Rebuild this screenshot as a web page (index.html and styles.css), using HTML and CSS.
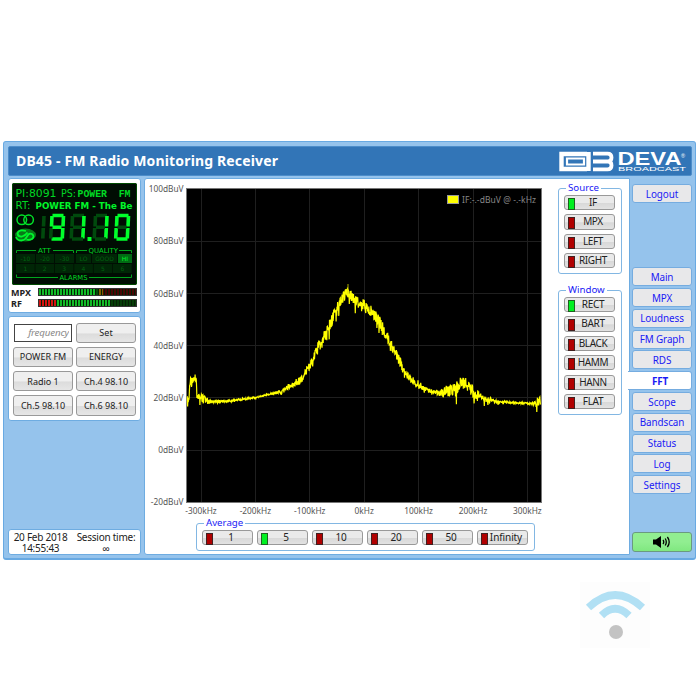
FILE: index.html
```html
<!DOCTYPE html>
<html lang="en">
<head>
    <meta charset="UTF-8">
    <meta name="viewport" content="width=device-width, initial-scale=1.0">
    <title>DB45 - FM Radio Monitoring Receiver</title>
    <link rel="stylesheet" href="styles.css">
</head>
<body>
    <div class="device">
        <header class="titlebar">
            <h1>DB45 - FM Radio Monitoring Receiver</h1>
            <svg class="logo" width="130" height="24" viewBox="558 148 130 24">
                <!-- logo mark -->
                <g fill="none" stroke="#fff">
                    <path d="M587 153H561.500V168H587" stroke-width="4.400"/>
                    <path d="M567 157.500H584V163.500H567Z" stroke-width="2.200"/>
                    <path d="M588.500 151V170" stroke-width="4.400"/>
                    <path d="M593 152.600H607.500Q611.500 152.600 611.500 156.500T608 160.500H593M608 160.500Q611.500 160.500 611.500 164.400T607.500 168.400H593" stroke-width="3.800"/>
                </g>
                <text x="617.500" y="163.800" class="logo-name" textLength="64" lengthAdjust="spacingAndGlyphs">DEVA</text>
                <text x="618" y="170.300" class="logo-sub" textLength="68" lengthAdjust="spacingAndGlyphs">BROADCAST</text>
                <text x="681" y="156.500" class="logo-sub">®</text>
            </svg>
        </header>

        <div class="columns">
            <aside class="left">
                <section class="panel status">
                    <svg class="lcd" width="125" height="102" viewBox="12 183 125 102">
                        <g class="lcd-text">
                            <text x="15.500" y="197.300" textLength="41" lengthAdjust="spacingAndGlyphs">PI:8091</text>
                            <text x="61" y="197.300" textLength="15" lengthAdjust="spacingAndGlyphs">PS:</text>
                            <text x="77.500" y="197.300" class="mono" textLength="53" lengthAdjust="spacingAndGlyphs">POWER&#160; FM</text>
                            <text x="15.500" y="209" textLength="15" lengthAdjust="spacingAndGlyphs">RT:</text>
                            <text x="35.500" y="209" class="strong" textLength="97" lengthAdjust="spacingAndGlyphs">POWER FM - The Be</text>
                        </g>
                        <!-- stereo and RDS indicators -->
                        <g fill="none" stroke="#00e428" stroke-width="1.500">
                            <circle cx="21.800" cy="219.800" r="4.800"/>
                            <circle cx="28.600" cy="219.800" r="4.800"/>
                        </g>
                        <ellipse cx="25.500" cy="235" rx="10.500" ry="6.500" fill="#087a18"/>
                        <path d="M26 231Q18.500 229 17.500 233.500Q18 237 22 236.500Q25.500 235.500 27.500 232.500M16 237Q17 240.500 21.500 240.500Q25.500 240 27 236.500Q29 232.500 32 234Q35 236.500 32 239Q29 240.500 26.500 239.500" fill="none" stroke="#00f52d" stroke-width="1.800"/>
                        <g id="digits"></g>
                        <rect x="87.500" y="237" width="4" height="4" fill="#00ff2b"/>
                        <!-- ATT / QUALITY / ALARMS brackets -->
                        <path d="M16.500 253V250.500H36M53 250.500H73.500V253M76.500 253V250.500H87M119 250.500H131.500V253M16.500 274.500V277.500H58M89 277.500H131.500V274.500" fill="none" stroke="#00a51d"/>
                        <g class="lcd-label">
                            <text x="38" y="252.700" textLength="13" lengthAdjust="spacingAndGlyphs">ATT</text>
                            <text x="88.500" y="252.700" textLength="29.500" lengthAdjust="spacingAndGlyphs">QUALITY</text>
                            <text x="59.500" y="280.200" textLength="28" lengthAdjust="spacingAndGlyphs">ALARMS</text>
                        </g>
                        <g id="cells"></g>
                    </svg>
                    <div class="meter"><span>MPX</span><div class="bar mpx"></div></div>
                    <div class="meter"><span>RF</span><div class="bar rf"></div></div>
                </section>

                <section class="panel presets">
                    <input type="text" placeholder="frequency">
                    <button>Set</button>
                    <button>POWER FM</button>
                    <button>ENERGY</button>
                    <button>Radio 1</button>
                    <button>Ch.4 98.10</button>
                    <button>Ch.5 98.10</button>
                    <button>Ch.6 98.10</button>
                </section>

                <section class="panel clock">
                    <div>20 Feb 2018<br>14:55:43</div>
                    <div>Session time:<br>∞</div>
                </section>
            </aside>

            <main class="center">
                <div class="view">
                    <svg id="chart" width="400" height="338" viewBox="145 180 400 338"></svg>
                    <div class="options">
                        <fieldset class="group source">
                            <legend>Source</legend>
                            <button class="on">IF</button>
                            <button>MPX</button>
                            <button>LEFT</button>
                            <button>RIGHT</button>
                        </fieldset>
                        <fieldset class="group window">
                            <legend>Window</legend>
                            <button class="on">RECT</button>
                            <button>BART</button>
                            <button>BLACK</button>
                            <button>HAMM</button>
                            <button>HANN</button>
                            <button>FLAT</button>
                        </fieldset>
                    </div>
                </div>
                <fieldset class="group average">
                    <legend>Average</legend>
                    <button>1</button>
                    <button class="on">5</button>
                    <button>10</button>
                    <button>20</button>
                    <button>50</button>
                    <button>Infinity</button>
                </fieldset>
            </main>

            <nav class="menu">
                <a class="logout">Logout</a>
                <a>Main</a>
                <a>MPX</a>
                <a>Loudness</a>
                <a>FM Graph</a>
                <a>RDS</a>
                <a class="active">FFT</a>
                <a>Scope</a>
                <a>Bandscan</a>
                <a>Status</a>
                <a>Log</a>
                <a>Settings</a>
                <a class="audio">
                    <svg width="18" height="12" viewBox="0 0 18 12">
                        <path d="M0 3.500H3L8 0V12L3 8.500H0Z"/>
                        <path d="M10 4Q11.500 6 10 8M12.200 2.500Q14.400 6 12.200 9.500M14.400 1Q18 6 14.400 11" fill="none" stroke="#000" stroke-width="1.300"/>
                    </svg>
                </a>
            </nav>
        </div>
    </div>

    <div class="wifi">
        <svg width="70" height="66" viewBox="580 582 70 66">
            <g fill="none" stroke="#b1e0f4">
                <path d="M588.500 607.500Q615 582.500 642.500 607.500" stroke-width="7.500"/>
                <path d="M601.500 615.500Q615 602 629 615.500" stroke-width="7.500"/>
            </g>
            <circle cx="616" cy="632" r="7" fill="#c3c3c3"/>
        </svg>
    </div>

    <script src="script.js"></script>
</body>
</html>
```
FILE: styles.css
```css
* {
    box-sizing: border-box;
}

body {
    margin: 0;
    padding-top: 141px;
    height: 700px;
    overflow: hidden;
    background: #fff;
    font-family: "Noto Sans", sans-serif;
    font-size: 10px;
    color: #222;
}

button, input {
    font-family: inherit;
    color: #222;
    padding: 0;
}

.device {
    width: 693px;
    height: 419px;
    margin-left: 3px;
    padding: 4px 3px 3px 4px;
    background: #95c3ec;
    border: 1px solid #68a9e2;
    border-bottom-width: 2px;
    border-radius: 3px;
}

.titlebar {
    display: flex;
    justify-content: space-between;
    align-items: center;
    height: 30px;
    padding: 0 3px 0 7px;
    background: #3275b7;
    border: 1px solid #4c8dca;
    border-radius: 2px;
}

.titlebar h1 {
    margin: 0;
    color: #fff;
    font-size: 14px;
    line-height: 28px;
    letter-spacing: 0.15px;
    white-space: nowrap;
}

.logo-name {
    font: bold 18px "Liberation Sans", sans-serif;
    fill: #fff;
}

.logo-sub {
    font: 5.5px "Liberation Sans", sans-serif;
    fill: #fff;
}

.columns {
    display: flex;
    height: 379px;
    padding-top: 2px;
}

/* left column */
.left {
    display: flex;
    flex-direction: column;
    width: 133px;
}

.panel {
    background: #fff;
    border: 1px solid #6eace1;
    border-radius: 3px;
}

.status {
    height: 135px;
    padding: 4px 3px 0;
}

.lcd {
    display: block;
    background: #000d03;
    border-radius: 2px;
    outline: 1px solid #004b00;
    outline-offset: -1px;
}

.lcd-text {
    font: 10px "DejaVu Sans", sans-serif;
    fill: #00d824;
}

.lcd-text .mono {
    font-family: "Liberation Mono", monospace;
    font-weight: bold;
    font-size: 10.5px;
}

.lcd-text .strong {
    font-weight: bold;
    font-size: 9.5px;
    fill: #00f52a;
}

.lcd-label {
    font: 6.8px "DejaVu Sans", sans-serif;
    fill: #00d824;
}

.lcd-cell {
    font: 6px "DejaVu Sans", sans-serif;
    fill: #00600f;
    text-anchor: middle;
}

.lcd-cell.lit {
    fill: #00f52a;
}

.meter {
    display: flex;
    height: 11px;
    align-items: center;
    padding-top: 3px;
}

.meter span {
    width: 26px;
    margin-left: -1px;
    margin-right: 1px;
    font: bold 9px/9px "Noto Sans", sans-serif;
}

.bar {
    width: 99px;
    height: 8px;
    border: 1px solid #333;
}

.bar.mpx {
    background: repeating-linear-gradient(90deg, transparent 0 2px, #052005 2px 3px), linear-gradient(90deg, #12bb27 0 57px, #064c08 57px 60px, #806000 60px 64px, #4a0505 64px);
}

.bar.rf {
    background: repeating-linear-gradient(90deg, transparent 0 2px, #052005 2px 3px), linear-gradient(90deg, #d51212 0 17px, #12bb27 17px 71px, #063d08 71px);
}

.presets {
    display: grid;
    grid-template-columns: 60px 60px;
    grid-auto-rows: 20.300px;
    gap: 4px 3px;
    height: 105px;
    margin-top: 3px;
    padding: 5.500px 4px;
}

.presets button {
    border: 1px solid #999;
    border-radius: 3px;
    background: linear-gradient(#efefef 50%, #dcdcdc 55%, #e6e6e6);
    font-size: 9px;
    white-space: nowrap;
}

.presets input {
    min-width: 0;
    margin: 1px;
    padding-right: 2px;
    border: 1px solid #444;
    background: #fff;
    font-size: 9.800px;
    font-style: italic;
    letter-spacing: -0.2px;
    text-align: right;
}

.presets input::placeholder {
    color: #8a8a8a;
}

.clock {
    display: flex;
    justify-content: space-around;
    height: 26px;
    margin-top: auto;
    padding-top: 2px;
    font-size: 10px;
    line-height: 10.500px;
    letter-spacing: -0.250px;
    text-align: center;
    white-space: nowrap;
}

/* center */
.center {
    width: 486px;
    margin-left: 3px;
    background: #fff;
    border: 1px solid #6eace1;
    border-radius: 3px 0 0 3px;
}

.view {
    display: flex;
    height: 338px;
}

#chart {
    flex: none;
    display: block;
    margin-top: 1px;
}

.axis {
    font: 8.3px "Noto Sans", sans-serif;
    fill: #555;
}

.key {
    font: 8.5px "Noto Sans", sans-serif;
    fill: #888;
}

.group {
    position: relative;
    display: flex;
    gap: 4.200px;
    min-width: 0;
    margin: 0;
    padding: 0;
    border: 1px solid #82b7e3;
    border-radius: 3px;
}

.group legend {
    position: absolute;
    top: -8px;
    left: 7px;
    padding: 0 2px;
    background: #fff;
    color: #1a1af5;
    font-size: 9.700px;
    line-height: 14px;
}

.group button {
    position: relative;
    height: 15.200px;
    width: 51px;
    flex: none;
    padding-left: 7px;
    border: 1px solid #999;
    border-radius: 3px;
    background: linear-gradient(#eaeaea 50%, #d8d8d8 55%, #e2e2e2);
    font-size: 10px;
    line-height: 13px;
    letter-spacing: -0.350px;
    white-space: nowrap;
}

/* led on each button */
.group button::before {
    content: "";
    position: absolute;
    left: 3px;
    top: 2px;
    width: 5px;
    height: 10px;
    border: 1px solid #402020;
    background: #b00000;
}

.group button.on::before {
    border-color: #206020;
    background: #00f020;
}

.options {
    padding: 9px 0 0 13px;
}

.source, .window {
    flex-direction: column;
    width: 64px;
    padding: 6px 5px 0;
}

.source {
    height: 86px;
}

.window {
    height: 125px;
    margin-top: 16px;
}

.average {
    width: 339px;
    height: 28px;
    margin: 6px 0 0 51px;
    padding: 6px 5px 0;
    gap: 4px;
}

.average button {
    letter-spacing: -0.1px;
}

/* right menu */
.menu {
    display: flex;
    flex-direction: column;
    gap: 1.800px;
    width: 60px;
    margin-left: 2px;
    padding-top: 6px;
}

.menu a {
    display: flex;
    flex: none;
    align-items: center;
    justify-content: center;
    height: 19px;
    border: 1px solid #75ace0;
    border-radius: 3px;
    background: #e8e8ea;
    color: #1a1af5;
    font-size: 9.900px;
    letter-spacing: -0.100px;
}

.menu .logout {
    margin-bottom: 62.500px;
}

.menu .active {
    margin-left: -4px;
    padding-left: 1px;
    border-left: 0;
    border-radius: 0 3px 3px 0;
    background: #fff;
    font-weight: bold;
    z-index: 1;
}

.menu .audio {
    height: 20px;
    margin-top: auto;
    margin-bottom: 3px;
    border-color: #6a9a80;
    background: linear-gradient(#91ee91 50%, #80e880);
}

.wifi {
    margin: 22px 0 0 580px;
    width: 70px;
    height: 66px;
    background: #fdfdfd;
}
```
FILE: script.js
```javascript
function add(parent, tag, attrs, text) {
    const el = document.createElementNS('http://www.w3.org/2000/svg', tag);
    for (const key in attrs) el.setAttribute(key, attrs[key]);
    if (text) el.textContent = text;
    parent.appendChild(el);
    return el;
}

// seven segment display, segments a-g
const digits = document.getElementById('digits');
const segments = {
    a: [3, 2, 14, 2], b: [14, 2.5, 13.5, 13], c: [13.3, 14.5, 12.8, 25],
    d: [2, 25.5, 13, 25.5], e: [1.7, 14.5, 1.2, 25], f: [2.5, 2.5, 2, 13], g: [3, 13.8, 12, 13.8]
};

function drawDigit(x, lit, all) {
    for (const s of all || 'abcdefg') {
        const [x1, y1, x2, y2] = segments[s];
        add(digits, 'line', {
            x1: x + x1, y1: 213.5 + y1, x2: x + x2, y2: 213.5 + y2,
            stroke: lit.includes(s) ? '#00ff2b' : '#004a0d', 'stroke-width': 3.6
        });
    }
}
drawDigit(30, '', 'bc');
drawDigit(49.5, 'abcdfg');
drawDigit(70, 'bc');
drawDigit(93, 'bc');
drawDigit(114.5, 'abcdef');

// attenuation, quality and alarm cells
const cells = document.getElementById('cells');
const top6 = ['-10', '-20', '-30', 'LO', 'GOOD', 'HI'];
const topX = [16, 36, 55, 76, 92, 118];
const topW = [19, 18, 19, 15, 25, 14];
for (let i = 0; i < 6; i++) {
    const lit = top6[i] === 'HI';
    add(cells, 'rect', { x: topX[i], y: 254, width: topW[i], height: 9, fill: lit ? '#006b13' : '#002606' });
    add(cells, 'text', { x: topX[i] + topW[i] / 2, y: 260.5, class: lit ? 'lcd-cell lit' : 'lcd-cell' }, top6[i]);
    add(cells, 'rect', { x: 16 + i * 19.4, y: 264, width: 18.7, height: 9, fill: '#002606' });
    add(cells, 'text', { x: 25.3 + i * 19.4, y: 270.5, class: 'lcd-cell' }, String(i + 1));
}

// spectrum chart
const chart = document.getElementById('chart');
add(chart, 'rect', { x: 186.5, y: 188.5, width: 355, height: 314, fill: '#000', stroke: '#777' });

for (let i = 0; i < 7; i++) {
    const y = 188.5 + i * 52.2;
    const x = 200.5 + i * 54.4;
    if (i > 0 && i < 6) add(chart, 'path', { d: `M187 ${Math.round(y) + 0.5}H541`, stroke: '#1f1f1f' });
    add(chart, 'path', { d: `M${Math.round(x) + 0.5} 189V502`, stroke: '#1f1f1f' });
    const db = (100 - i * 20) + 'dBuV';
    add(chart, 'text', { x: 183.5, y: y + 3.7, class: 'axis', 'text-anchor': 'end' }, db);
    const khz = (i - 3) * 100 + 'kHz';
    add(chart, 'text', { x: x + 0.5, y: 513.5, class: 'axis', 'text-anchor': 'middle' }, khz);
}

// x, y, noise amplitude
const curve = [
    [187, 402, 10], [189, 401, 10], [190, 382, 10], [193, 382, 11], [196, 376, 9], [197, 396, 8], [201, 397, 8],
    [205, 400, 9], [211, 402, 3], [230, 401, 2.4], [255, 397.5, 1.5], [270, 394, 1.6], [283, 391, 4],
    [292, 384, 7], [302, 380, 10], [309, 366, 12], [317, 350, 13], [325, 336, 13], [333, 317, 13], [340, 302, 12],
    [347, 292, 10], [353, 298, 12], [360, 303, 12], [366, 307, 12], [375, 315, 12], [382, 326, 12], [390, 342, 11],
    [396, 354, 11], [404, 370, 10], [410, 378, 8], [418, 384, 8], [426, 389, 5], [434, 392, 4], [442, 393, 8],
    [448, 391, 13], [456, 389, 14], [462, 382, 13], [467, 385, 13], [476, 394, 11], [482, 398, 6], [492, 401, 5],
    [500, 402, 2], [531, 403.5, 1.5], [535, 403, 8], [541, 400, 9]
];

let seed = 45;
function random() {
    seed = (seed * 16807) % 2147483647;
    return seed / 2147483647;
}

let points = '';
let k = 0;
for (let x = 187; x <= 541; x += 0.3) {
    while (k < curve.length - 2 && x > curve[k + 1][0]) k++;
    const [x0, y0, n0] = curve[k];
    const [x1, y1, n1] = curve[k + 1];
    const t = (x - x0) / (x1 - x0);
    const noise = n0 + (n1 - n0) * t;
    let y = y0 + (y1 - y0) * t + (random() - 0.5) * noise;
    if (random() > 0.93) y += random() * noise * 0.9;
    points += `${x.toFixed(2)},${y.toFixed(2)} `;
}
add(chart, 'polyline', { points: points, fill: 'none', stroke: '#ffff00', 'stroke-width': 1.2 });
add(chart, 'path', { d: 'M348 294V284', stroke: '#d8d800', 'stroke-width': 0.8 });

add(chart, 'rect', { x: 447.5, y: 195.5, width: 11, height: 8, fill: '#ffff00', stroke: '#999' });
add(chart, 'text', { x: 462, y: 202.7, class: 'key', textLength: 74 }, 'IF:-.-dBuV @ -.-kHz');
```
